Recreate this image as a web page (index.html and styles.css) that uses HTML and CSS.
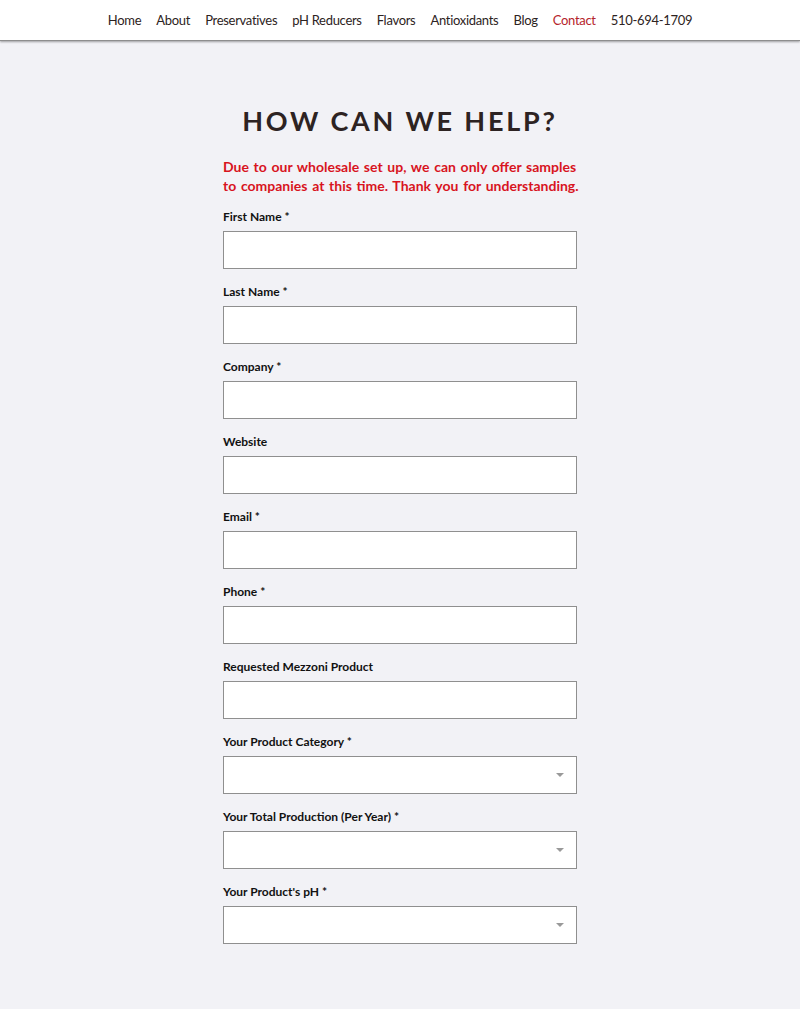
FILE: index.html
```html
<!DOCTYPE html>
<html lang="en">
    <head>
        <meta charset="UTF-8" />
        <meta name="viewport" content="width=device-width, initial-scale=1" />
        <title>Contact</title>
        <link rel="stylesheet" href="styles.css">
    </head>
    <body>
        <header class="topbar">
            <nav class="menu">
                <a href="#">Home</a>
                <a href="#">About</a>
                <a href="#">Preservatives</a>
                <a href="#">pH Reducers</a>
                <a href="#">Flavors</a>
                <a href="#">Antioxidants</a>
                <a href="#">Blog</a>
                <a href="#" class="current">Contact</a>
                <a href="#">510-694-1709</a>
            </nav>
        </header>

        <main class="container">
            <h1>HOW CAN WE HELP?</h1>
            <p class="notice">Due to our wholesale set up, we can only offer samples to companies at this time. Thank you for understanding.</p>
            <form id="contactForm">
                <div class="field">
                    <label for="first">First Name *</label>
                    <input type="text" id="first" name="first" required />
                </div>
                <div class="field">
                    <label for="last">Last Name *</label>
                    <input type="text" id="last" name="last" required />
                </div>
                <div class="field">
                    <label for="company">Company *</label>
                    <input type="text" id="company" name="company" required />
                </div>
                <div class="field">
                    <label for="website">Website</label>
                    <input type="text" id="website" name="website" />
                </div>
                <div class="field">
                    <label for="email">Email *</label>
                    <input type="text" id="email" name="email" required />
                </div>
                <div class="field">
                    <label for="phone">Phone *</label>
                    <input type="text" id="phone" name="phone" required />
                </div>
                <div class="field">
                    <label for="product">Requested Mezzoni Product</label>
                    <input type="text" id="product" name="product" />
                </div>
                <div class="field">
                    <label for="category">Your Product Category *</label>
                    <select id="category" name="category" required>
                        <option value=""></option>
                    </select>
                </div>
                <div class="field">
                    <label for="production">Your Total Production (Per Year) *</label>
                    <select id="production" name="production" required>
                        <option value=""></option>
                    </select>
                </div>
                <div class="field">
                    <label for="ph">Your Product's pH *</label>
                    <select id="ph" name="ph" required>
                        <option value=""></option>
                    </select>
                </div>
            </form>
        </main>
    </body>
</html>
```

FILE: styles.css
```css
/* Reset */
* {
    box-sizing: border-box;
    margin: 0;
    padding: 0;
}
body {
    font-family: "Lato", "Noto Sans", sans-serif;
    background: #f2f2f6;
    color: #2d2322;
    min-height: 100vh;
}
.topbar {
    background: #fff;
    height: 41px;
    border-bottom: 1px solid #8e8e8e;
    box-shadow: 0 1px 2px rgba(0, 0, 0, 0.35);
    display: flex;
    justify-content: center;
    align-items: center;
}
.menu {
    display: flex;
    gap: 15px;
    padding-bottom: 1px;
}
.menu a {
    font-size: 13px;
    letter-spacing: -0.3px;
    color: #2d2322;
    text-decoration: none;
}
.menu a.current {
    color: #b5242b;
}
.container {
    width: 354px;
    margin: 0 auto;
    padding-top: 60px;
}
h1 {
    text-align: center;
    font-size: 27px;
    font-weight: 700;
    letter-spacing: 2.8px;
    color: #2d2322;
    margin-bottom: 16px;
    line-height: 40px;
}
.notice {
    font-weight: 700;
    font-size: 14px;
    word-spacing: 1.3px;
    line-height: 19px;
    color: #d8141e;
    margin-right: -8px;
    margin-bottom: 13px;
}
.field {
    margin-bottom: 14px;
}
label {
    display: block;
    font-size: 12px;
    font-weight: 700;
    color: #111;
    line-height: 15px;
    padding-top: 1px;
    margin-bottom: 7px;
}
input[type="text"],
select {
    display: block;
    width: 100%;
    height: 38px;
    background: #fff;
    border: 1px solid #8f8f8f;
    border-radius: 0;
    font-size: 14px;
    padding: 0 10px;
}
/* small grey caret on the dropdowns */
select {
    appearance: none;
    background: #fff url("data:image/svg+xml,%3Csvg xmlns='http://www.w3.org/2000/svg' width='8' height='4'%3E%3Cpath d='M0 0h8L4 4z' fill='%23999'/%3E%3C/svg%3E") no-repeat right 12px center;
}
```
